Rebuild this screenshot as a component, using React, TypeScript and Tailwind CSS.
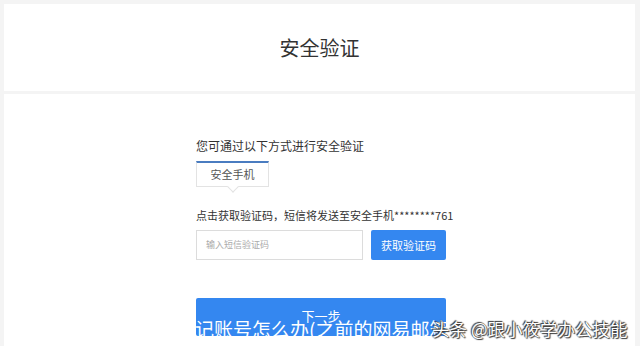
export default function App() {
  return (
    <div
      className="relative h-[346px] w-[640px] overflow-hidden bg-[#f4f4f4] pl-[4px] pr-[5px] pt-[4px]"
      style={{ fontFamily: '"Noto Sans CJK SC", "Noto Sans", sans-serif' }}
    >
      <div className="flex h-[87px] items-center justify-center bg-white">
        <h1 className="text-[20px] font-normal text-[#333]">安全验证</h1>
      </div>

      <div className="mt-[3px] h-[260px] bg-white pl-[192px] pt-[42px]">
        <p className="text-[12px] leading-[20px] text-[#333]">您可通过以下方式进行安全验证</p>

        <div className="relative mt-[5px] flex h-[26px] w-[73px] items-center justify-center border border-t-2 border-[#e3e3e3] border-t-[#4a7cc0] bg-white">
          <span className="text-[11px] text-[#555]">安全手机</span>
          <span className="absolute -bottom-[5px] left-1/2 h-[8px] w-[8px] -translate-x-1/2 rotate-45 border-b border-r border-[#e3e3e3] bg-white" />
        </div>

        <p className="mt-[19px] text-[11px] leading-[18px] text-[#333]">
          点击获取验证码，短信将发送至安全手机********761
        </p>

        <div className="mt-[6px] flex gap-[8px]">
          <div className="flex h-[30px] w-[167px] items-center border border-[#dcdcdc] px-[9px]">
            <span className="text-[9px] text-[#aaa]">输入短信验证码</span>
          </div>
          <button
            type="button"
            className="flex h-[30px] w-[75px] items-center justify-center rounded-[2px] bg-[#3487f0] text-[11px] text-white"
          >
            获取验证码
          </button>
        </div>

        <button
          type="button"
          className="mt-[38px] flex h-[38px] w-[250px] items-start justify-center rounded-[2px] bg-[#3487f0] pt-[8px] text-[13px] text-white"
        >
          下一步
        </button>
      </div>

      <span className="absolute left-[176px] top-[317px] whitespace-nowrap text-[19px] leading-[24px] text-white">
        忘记账号怎么办(之前的网易邮箱
      </span>
      <span
        className="absolute left-[432px] top-[318px] whitespace-nowrap text-[17.5px] leading-[22px] text-white"
        style={{ textShadow: "0 0 1px #333, 1px 1px 1px #333, -1px -1px 1px #333" }}
      >
        头条 @跟小筱学办公技能
      </span>
    </div>
  );
}
